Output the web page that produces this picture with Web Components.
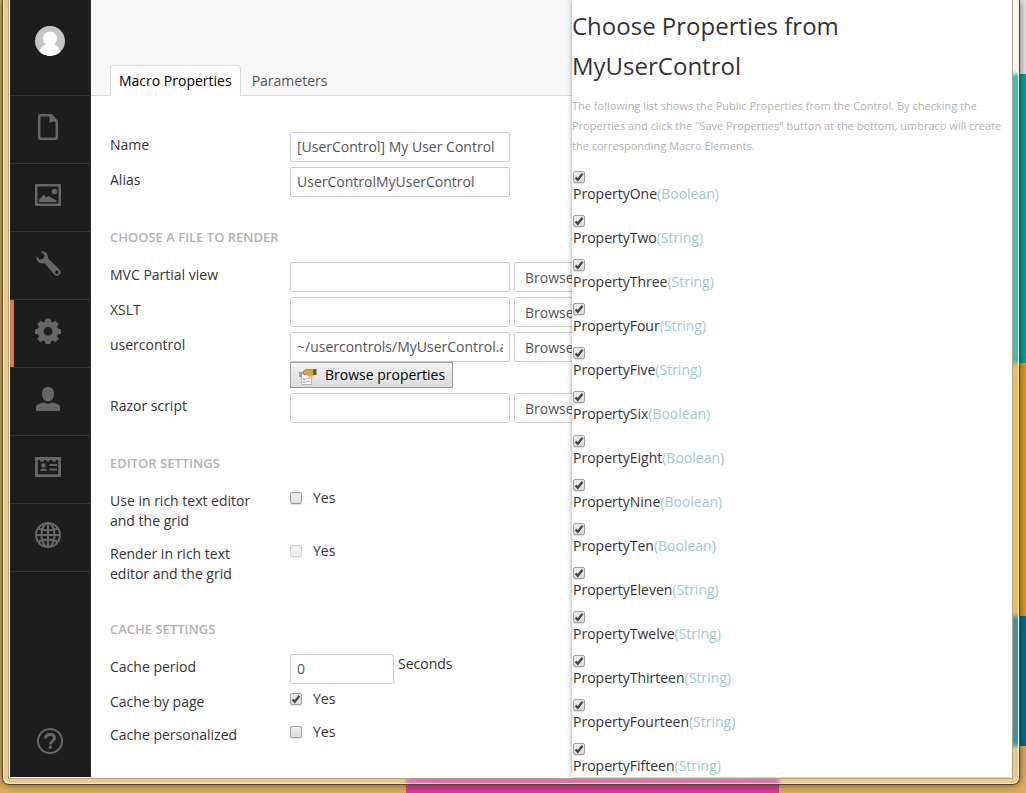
<!DOCTYPE html>
<html lang="en">
<head>
<meta charset="utf-8">
<title>Macro Properties</title>
<style>
html, body { height: 100%; margin: 0; }
body {
  overflow: hidden;
  font: 14px/20px "Open Sans", sans-serif;
  color: #343434;
}
</style>
</head>
<body>
<desk-window>
  <app-nav slot="nav">
    <nav-item icon="file" label="Content"></nav-item>
    <nav-item icon="picture" label="Media"></nav-item>
    <nav-item icon="wrench" label="Settings"></nav-item>
    <nav-item icon="cog" label="Developer" active></nav-item>
    <nav-item icon="user" label="Users"></nav-item>
    <nav-item icon="card" label="Members"></nav-item>
    <nav-item icon="globe" label="Translation"></nav-item>
  </app-nav>
  <macro-editor slot="main">
    <form-section>
      <form-row label="Name" value="[UserControl] My User Control"></form-row>
      <form-row label="Alias" value="UserControlMyUserControl"></form-row>
    </form-section>
    <form-section heading="Choose a file to render">
      <form-row label="MVC Partial view" browse></form-row>
      <form-row label="XSLT" browse></form-row>
      <form-row label="usercontrol" value="~/usercontrols/MyUserControl.ascx" browse>
        <browse-button>Browse properties</browse-button>
      </form-row>
      <form-row label="Razor script" browse></form-row>
    </form-section>
    <form-section heading="Editor settings">
      <form-row type="check" label="Use in rich text editor and the grid"></form-row>
      <form-row type="check" label="Render in rich text editor and the grid" disabled></form-row>
    </form-section>
    <form-section heading="Cache settings">
      <form-row label="Cache period" value="0" suffix="Seconds"></form-row>
      <form-row type="check" label="Cache by page" checked></form-row>
      <form-row type="check" label="Cache personalized"></form-row>
    </form-section>
  </macro-editor>
  <property-panel slot="panel">
    <span slot="title">Choose Properties from MyUserControl</span>
    <span slot="intro">The following list shows the Public Properties from the Control. By checking the Properties and click the "Save Properties" button at the bottom, umbraco will create the corresponding Macro Elements.</span>
    <property-item name="PropertyOne" type="Boolean"></property-item>
    <property-item name="PropertyTwo" type="String"></property-item>
    <property-item name="PropertyThree" type="String"></property-item>
    <property-item name="PropertyFour" type="String"></property-item>
    <property-item name="PropertyFive" type="String"></property-item>
    <property-item name="PropertySix" type="Boolean"></property-item>
    <property-item name="PropertyEight" type="Boolean"></property-item>
    <property-item name="PropertyNine" type="Boolean"></property-item>
    <property-item name="PropertyTen" type="Boolean"></property-item>
    <property-item name="PropertyEleven" type="String"></property-item>
    <property-item name="PropertyTwelve" type="String"></property-item>
    <property-item name="PropertyThirteen" type="String"></property-item>
    <property-item name="PropertyFourteen" type="String"></property-item>
    <property-item name="PropertyFifteen" type="String"></property-item>
  </property-panel>
</desk-window>

<script>
const ICONS = {
  file: '<path fill-rule="evenodd" d="M5 0h12l6 7v17a2 2 0 0 1-2 2H5a2 2 0 0 1-2-2V2a2 2 0 0 1 2-2zm1 2.500a.5.5 0 0 0-.5.5v20a.5.5 0 0 0 .5.5h14a.5.5 0 0 0 .5-.5V8L18 7.500 14.500 9V2.500z"/>',
  picture: '<path fill-rule="evenodd" d="M1 2h24a1 1 0 0 1 1 1v20a1 1 0 0 1-1 1H1a1 1 0 0 1-1-1V3a1 1 0 0 1 1-1zm1.500 2.500v17h21v-17z"/><circle cx="19.500" cy="9.500" r="2.800"/><path d="M4 20v-2l4.500-5.500 3 3 2-1.500 8 4.500V20z"/>',
  wrench: '<path fill-rule="evenodd" d="M1.500 6.500 5 9.500l3.500-1L9.500 5 5.500 1.300C9.500.5 13.500 3 13.200 8.500L24.500 19.500a3.600 3.600 0 0 1-5 5.200L9.500 13.200C5 14.500 1 11.500 1.500 6.500zM21.800 20.600a1.700 1.700 0 1 0 .1 0z"/>',
  cog: '<path fill-rule="evenodd" stroke="#666" stroke-linejoin="round" d="M11 1h4l.6 3 2.200.9 2.700-1.700 2.800 2.800-1.700 2.700.9 2.200 3 .6v4l-3 .6-.9 2.200 1.700 2.700-2.800 2.800-2.700-1.700-2.200.9-.6 2.500h-4l-.6-2.500-2.200-.9-2.700 1.700L2.700 21l1.700-2.700-.9-2.200L.5 15.500v-4l3-.6.9-2.200L2.700 6l2.800-2.800 2.700 1.700 2.200-.9zM13 8.500a4.800 4.800 0 1 0 .1 0z"/>',
  user: '<path d="M13 1c4 0 6 2.500 6 6.500 0 3.500-1.800 8-6 8s-6-4.500-6-8C7 3.500 9 1 13 1z"/><path d="M1 25v-4c0-2 2-3 8-4.500 2.500 1.500 5.500 1.500 8 0 6 1.500 8 2.500 8 4.500v4z"/>',
  card: '<path fill-rule="evenodd" d="M0 3h26v20H0zm2.800 3v14.200h20.400V6H21v1.500h-4V6h-2.500v1.500h-3.500V6H9v1.500H5V6z"/><circle cx="8.500" cy="11.500" r="2.300"/><path d="M5 17c0-1.800 2-2.200 3.500-2.200S12 15.200 12 17zM14.500 10H22v2h-7.500zM14.500 14.500H22v2h-7.500z"/>',
  globe: '<g fill="none" stroke="#666" stroke-width="2"><circle cx="13" cy="13" r="12"/><ellipse cx="13" cy="13" rx="6.500" ry="12"/><path d="M13 1v24M1 13h24M3.500 6.500q9.500 4 19 0M3.500 19.500q9.500-4 19 0"/></g>'
};

const define = (name, html, setup) => {
  const template = document.createElement('template');
  template.innerHTML = html;
  customElements.define(name, class extends HTMLElement {
    constructor() {
      super();
      this.attachShadow({ mode: 'open' }).append(template.content.cloneNode(true));
    }
    connectedCallback() {
      if (setup && !this.ready) setup(this, this.shadowRoot);
      this.ready = true;
    }
  });
};

/* Shared look of the small bevelled tick boxes. */
const CHECK_CSS = `
input[type=checkbox] {
  appearance: none; box-sizing: border-box; flex: none; display: block;
  width: 12px; height: 12px; margin: 0;
  border: 1px solid #a0a0a0; border-radius: 2px;
  background: linear-gradient(#ededed, #dcdcdc);
  box-shadow: 0 1px 1px rgba(0,0,0,.12);
}
input[type=checkbox]:checked {
  background: url("data:image/svg+xml,%3Csvg xmlns='http://www.w3.org/2000/svg' viewBox='0 0 10 10'%3E%3Cpath d='M1.500 5.500 3.800 7.800 8.500 1.800' fill='none' stroke='%23444' stroke-width='2.200'/%3E%3C/svg%3E") center/10px 10px no-repeat, linear-gradient(#ededed, #dcdcdc);
}
input[type=checkbox]:disabled { border-color: #d0d0d0; background: #f0f0f0; box-shadow: none; }
`;

define('desk-window', `
<style>
:host {
  display: block; box-sizing: border-box; height: 100%; padding: 0 6px 8px 2px;
  background:
    linear-gradient(#e6e6e6 74px, #00a5a0 74px 363px, #e99b1c 363px 616px, #00708f 616px) right top/60px 746px no-repeat,
    linear-gradient(#d84096, #d84096) 406px 100%/373px 40px no-repeat,
    #dcae62;
}
.glass {
  box-sizing: border-box; height: 100%; padding: 0 6px 5px 5px;
  border: solid #54482f; border-width: 0 1px 1px;
  border-radius: 0 0 7px 7px;
  background: rgba(255,255,255,.22);
  backdrop-filter: blur(2px) brightness(1.06);
  box-shadow: inset 1px -1px #fff2d4, inset -1px 0 #fff2d4, 0 0 9px rgba(0,0,0,.55);
}
.client {
  display: flex; box-sizing: border-box; height: 100%; overflow: hidden;
  border: solid #b0a588; border-width: 0 1px 1px;
  background: #fff; padding: 0 0 1px 1px;
}
::slotted([slot=main]) { flex: 1; min-width: 0; }
</style>
<div class="glass"><div class="client">
  <slot name="nav"></slot><slot name="main"></slot><slot name="panel"></slot>
</div></div>`);

define('app-nav', `
<style>
:host {
  display: flex; flex: none; flex-direction: column; box-sizing: border-box;
  width: 81px; background: #1d1d1d; border-right: 1px solid #2b2b2b;
}
a { display: flex; justify-content: center; }
.avatar { padding: 26px 0 39px; border-bottom: 1px solid #343434; }
.help { margin-top: auto; padding-bottom: 23px; }
svg { display: block; }
</style>
<a class="avatar" href="#" aria-label="Profile"><svg width="30" height="30" viewBox="0 0 30 30">
  <defs><clipPath id="round"><circle cx="15" cy="15" r="15"/></clipPath></defs>
  <g clip-path="url(#round)"><path fill="#c4c4c4" d="M0 0h30v30H0z"/>
  <circle cx="15" cy="12.500" r="7" fill="#fff"/><path fill="#fff" d="M4 30c0-8 4-11 8-12h6c4 1 8 4 8 12z"/></g>
</svg></a>
<slot></slot>
<a class="help" href="#" aria-label="Help"><svg width="26" height="26" viewBox="0 0 26 26" fill="none" stroke="#666">
  <circle cx="13" cy="13" r="12" stroke-width="2"/>
  <path d="M8.500 10.500C8.500 7.500 10.500 6.500 13 6.500s4.500 1.200 4.500 3.800c0 3-4.200 2.700-4.200 6.200" stroke-width="3"/>
  <path d="M11.600 19.300h3.200" stroke-width="3"/>
</svg></a>`);

define('nav-item', `
<style>
:host { display: block; border-bottom: 1px solid #343434; }
a {
  display: flex; align-items: center; justify-content: center; box-sizing: border-box;
  height: 67px; padding: 0 4px 6px 0;
}
:host([active]) a { box-shadow: inset 4px 0 #e07b45; }
svg { display: block; fill: #666; }
</style>
<a href="#"><svg width="26" height="26" viewBox="0 0 26 26"></svg></a>`,
(el, root) => {
  root.querySelector('a').setAttribute('aria-label', el.getAttribute('label'));
  root.querySelector('svg').innerHTML = ICONS[el.getAttribute('icon')];
});

define('macro-editor', `
<style>
:host { display: block; overflow: hidden; }
header {
  display: flex; align-items: flex-end; box-sizing: border-box; height: 96px;
  padding-left: 19px; background: #f8f8f8; box-shadow: inset 0 -1px #d9d9d9;
}
a {
  padding: 5px 8px; margin-right: 2px; text-decoration: none; color: #555;
  border: solid transparent; border-width: 1px 1px 0; border-radius: 4px 4px 0 0;
}
a.on { color: #000; background: #fff; border-color: #d9d9d9; }
form { padding: 36px 0 0 19px; }
</style>
<header><a class="on" href="#">Macro Properties</a><a href="#">Parameters</a></header>
<form><slot></slot></form>`);

define('form-section', `
<style>
:host { display: block; margin-bottom: 30px; }
h2 { margin: 0 0 15px; font-size: 13px; line-height: 20px; font-weight: 600; text-transform: uppercase; color: #b3b3b3; }
.rows { display: grid; gap: 5px; }
</style>
<h2></h2><div class="rows"><slot></slot></div>`,
(el, root) => {
  const h = root.querySelector('h2');
  if (el.hasAttribute('heading')) h.textContent = el.getAttribute('heading');
  else h.remove();
});

define('form-row', `
<style>
:host { display: grid; grid-template-columns: 180px auto; justify-content: start; align-items: start; }
.name { box-sizing: border-box; width: 160px; padding: 3px 0 5px; }
.field { display: flex; gap: 4px; white-space: nowrap; }
input[type=text], button {
  box-sizing: border-box; height: 30px; margin: 0; padding: 3px 6px 5px;
  font: inherit; color: #555; background: #fff; border: 1px solid #ccc; border-radius: 2px;
}
input[type=text] { width: 220px; }
:host([suffix]) input[type=text] { width: 104px; }
button { width: 220px; padding: 5px 10px 3px; text-align: left; }
:host([type=check]) .field { gap: 11px; align-items: center; }
${CHECK_CSS}
</style>
<label class="name" for="f"></label>
<div><div class="field"><input id="f"></div><slot></slot></div>`,
(el, root) => {
  const input = root.querySelector('input'), field = root.querySelector('.field');
  root.querySelector('.name').textContent = el.getAttribute('label');
  const add = (tag, text) => {
    const node = document.createElement(tag);
    node.textContent = text;
    field.append(node);
    return node;
  };
  if (el.getAttribute('type') === 'check') {
    input.type = 'checkbox';
    input.checked = el.hasAttribute('checked');
    input.disabled = el.hasAttribute('disabled');
    add('label', 'Yes').htmlFor = 'f';
  } else {
    input.type = 'text';
    input.value = el.getAttribute('value') || '';
    if (el.hasAttribute('browse')) add('button', 'Browse').type = 'button';
    if (el.hasAttribute('suffix')) add('span', el.getAttribute('suffix'));
  }
});

define('browse-button', `
<style>
:host { display: block; }
button {
  display: flex; align-items: center; gap: 8px; box-sizing: border-box; height: 26px;
  margin: 0; padding: 0 7px 0 8px; font: inherit; color: #000;
  border: 1px solid #999; border-radius: 0; background: linear-gradient(#f3f3f3, #dcdcdc);
}
svg { display: block; margin-top: 3px; }
</style>
<button type="button"><svg width="18" height="18" viewBox="0 0 18 18">
  <path fill="#7da7cf" d="M0 4h5v5H0z"/>
  <path fill="#fafafa" stroke="#a9b2ba" d="M2.500 5.500h10v11h-10z"/>
  <path fill="#9fb6cc" d="M4 10h2v2H4zM4 13h2v2H4zM7 10h4v1H7zM7 13h4v1H7z"/>
  <path fill="#d6a43c" stroke="#8e6a20" stroke-width=".6" d="M4 3.500 7 1.500h6l2 1v4L11 8 8 6.500 5 7z"/>
  <path fill="#5d5a42" d="M14 1h3.500v6H14z"/><path fill="#eeb98a" d="m8 7 3 .5 3-1v2l-3 2z"/>
</svg><slot></slot></button>`);

define('property-panel', `
<style>
:host {
  display: block; flex: none; box-sizing: border-box; position: relative;
  width: 440px; padding: 6px 0 0;
  background: #fff; box-shadow: 0 0 5px rgba(0,0,0,.4);
}
h1 { margin: 0 120px 10px 0; font-size: 24px; line-height: 40px; font-weight: 400; }
p { margin: 0 0 15px; font-size: 11px; line-height: 20px; color: #b3b3b3; }
.list { padding-left: 1px; }
</style>
<h1><slot name="title"></slot></h1>
<p><slot name="intro"></slot></p>
<div class="list"><slot></slot></div>`);

define('property-item', `
<style>
:host { display: block; height: 44px; }
label { display: grid; justify-items: start; gap: 1px; }
b { font-weight: 400; }
i { font-style: normal; color: #9dcbce; }
${CHECK_CSS}
</style>
<label><input type="checkbox" checked><span><b></b><i></i></span></label>`,
(el, root) => {
  root.querySelector('b').textContent = el.getAttribute('name');
  root.querySelector('i').textContent = '(' + el.getAttribute('type') + ')';
});
</script>
</body>
</html>
